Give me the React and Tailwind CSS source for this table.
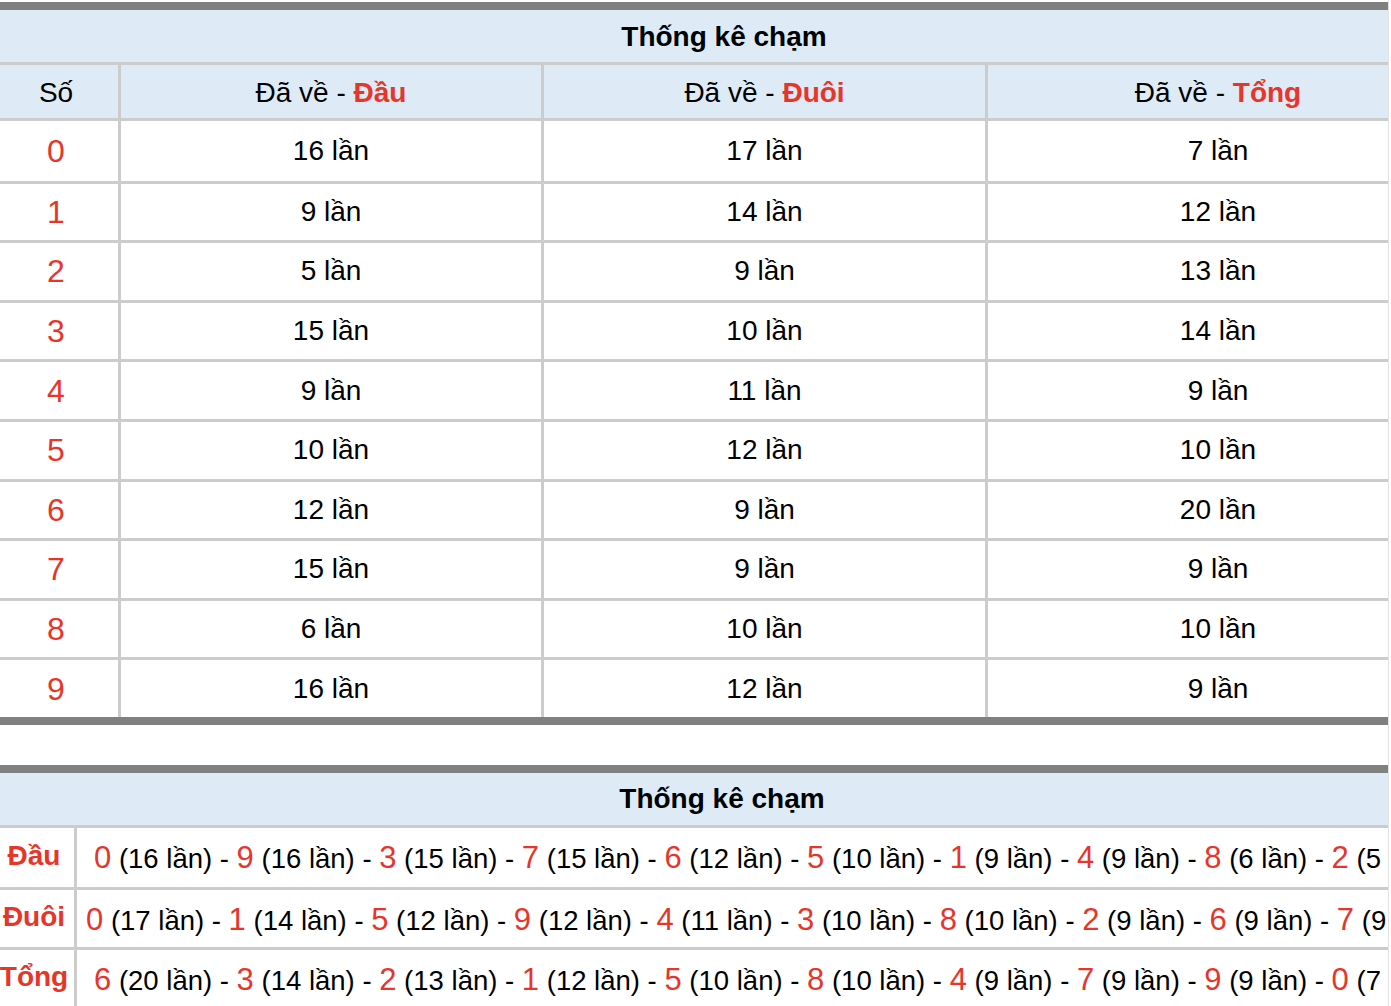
import React from 'react'

const rows = [
  ['0', 16, 17, 7],
  ['1', 9, 14, 12],
  ['2', 5, 9, 13],
  ['3', 15, 10, 14],
  ['4', 9, 11, 9],
  ['5', 10, 12, 10],
  ['6', 12, 9, 20],
  ['7', 15, 9, 9],
  ['8', 6, 10, 10],
  ['9', 16, 12, 9],
]

const summary = [
  {
    label: 'Đầu',
    h: 'h-[62px]',
    pad: 'pl-[17px]',
    items: [[0, 16], [9, 16], [3, 15], [7, 15], [6, 12], [5, 10], [1, 9], [4, 9], [8, 6], [2, 5], [3, 5]],
  },
  {
    label: 'Đuôi',
    h: 'h-[60px]',
    pad: 'pl-[9px]',
    items: [[0, 17], [1, 14], [5, 12], [9, 12], [4, 11], [3, 10], [8, 10], [2, 9], [6, 9], [7, 9], [9, 7]],
  },
  {
    label: 'Tổng',
    h: 'h-[60px]',
    pad: 'pl-[17px]',
    items: [[6, 20], [3, 14], [2, 13], [1, 12], [5, 10], [8, 10], [4, 9], [7, 9], [9, 9], [0, 7], [2, 5]],
  },
]

const cols = 'grid grid-cols-[118px_423px_444px_463px]'
const cell = 'flex items-center justify-center border-l-[3px] border-[#cccccc]'

export default function App() {
  return (
    <div className="w-[1389px] overflow-hidden border-r border-[#e3e3e3] bg-white text-[28px] leading-none text-black font-['Liberation_Sans',Arial,sans-serif]">
      {/* bảng 1 */}
      <div className="mt-[2px] w-[1448px] border-t-[8px] border-b-[8px] border-[#808080]">
        <div className="flex h-[52px] items-center justify-center bg-[#deebf6] pt-[1px] font-bold">
          Thống kê chạm
        </div>
        <div className={`${cols} h-[59px] border-t-[3px] border-b-[3px] border-[#cccccc] bg-[#deebf6]`}>
          <div className="flex items-center justify-center pr-[6px] pt-[3px]">Số</div>
          <div className={`${cell} pt-[3px]`}>
            Đã về -&nbsp;<b className="text-[#e8352a]">Đầu</b>
          </div>
          <div className={`${cell} pt-[3px]`}>
            Đã về -&nbsp;<b className="text-[#e8352a]">Đuôi</b>
          </div>
          <div className={`${cell} pt-[3px]`}>
            Đã về -&nbsp;<b className="text-[#e8352a]">Tổng</b>
          </div>
        </div>
        {rows.map((r, i) => (
          <div
            key={r[0]}
            className={`${cols} ${i > 0 ? 'h-[59.6px] border-t-[3px] border-[#cccccc]' : 'h-[59.6px]'}`}
          >
            <div className="flex items-center justify-center pr-[6px] text-[32px] text-[#e8352a]">{r[0]}</div>
            <div className={cell}>{r[1]} lần</div>
            <div className={cell}>{r[2]} lần</div>
            <div className={cell}>{r[3]} lần</div>
          </div>
        ))}
      </div>

      {/* bảng 2 */}
      <div className="mt-[40px] w-[1444px] border-t-[8px] border-[#808080]">
        <div className="flex h-[52px] items-center justify-center bg-[#deebf6] pt-[1px] font-bold">
          Thống kê chạm
        </div>
        {summary.map((row) => (
          <div key={row.label} className={`flex ${row.h} border-t-[3px] border-[#cccccc]`}>
            <div className="flex w-[74px] shrink-0 items-center justify-center pb-[3px] pr-[6px] font-bold text-[#e8352a]">
              <span className="whitespace-nowrap">{row.label}</span>
            </div>
            <div className={`flex-1 whitespace-nowrap border-l-[3px] border-[#cccccc] pt-[14px] text-[27.5px] leading-[32px] ${row.pad}`}>
              {row.items.map(([n, c], k) => (
                <React.Fragment key={k}>
                  {k > 0 && ' - '}
                  <span className="text-[31px] text-[#e8352a]">{n}</span> ({c} lần)
                </React.Fragment>
              ))}
            </div>
          </div>
        ))}
      </div>
    </div>
  )
}
